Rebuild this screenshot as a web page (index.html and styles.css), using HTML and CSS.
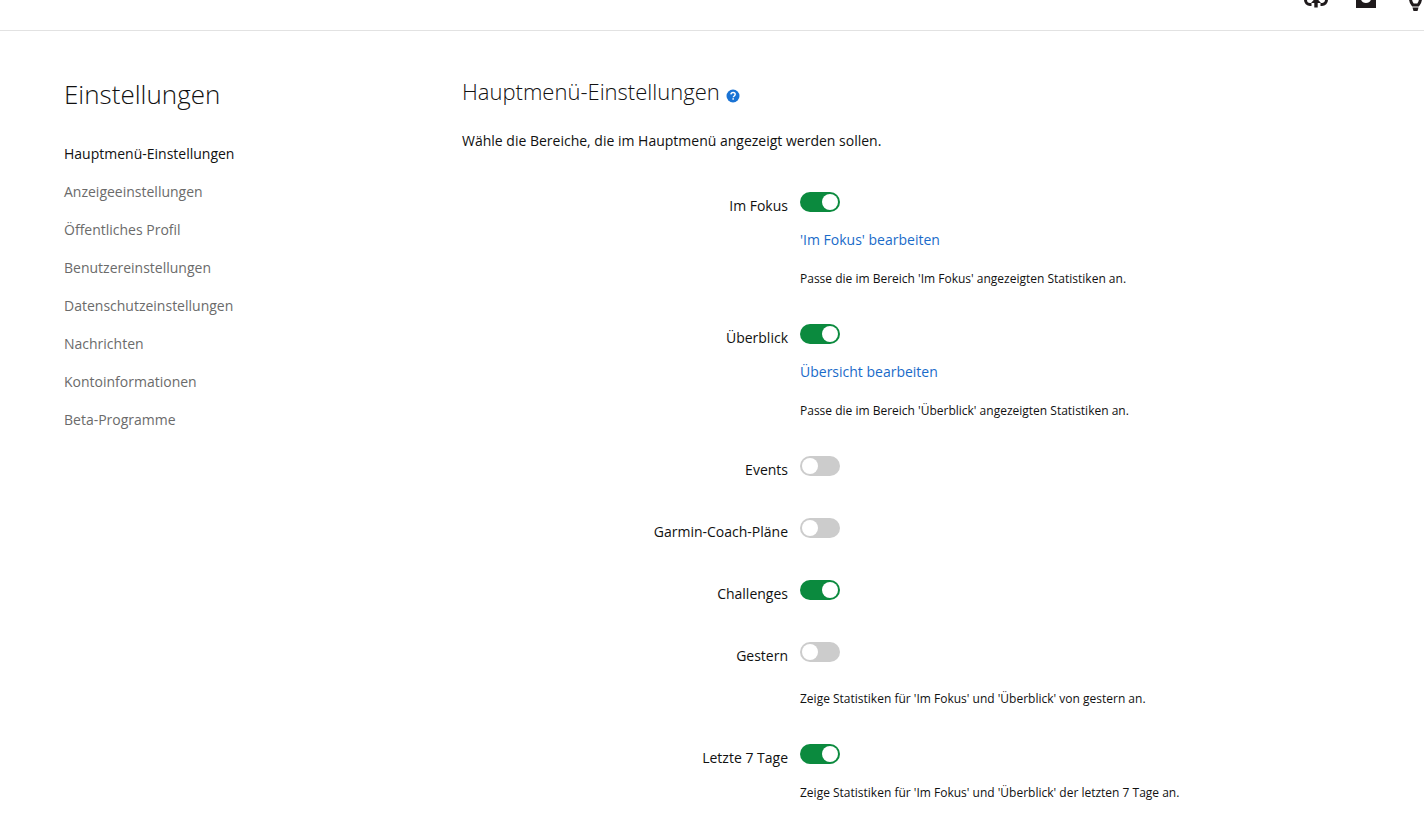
FILE: index.html
```html
<!DOCTYPE html>
<html lang="de">
<head>
<meta charset="utf-8">
<title>Einstellungen</title>
<link rel="stylesheet" href="styles.css">
</head>
<body>
<header class="topbar">
  <svg class="icon icon-cloud" width="24" height="24" viewBox="0 0 24 24">
    <path d="M7.500 19.500H6A4.500 4.500 0 0 1 1.500 15V8M16.500 19.500H18a4.500 4.500 0 0 0 4.500-4.500V8" fill="none" stroke="#1f1a1c" stroke-width="3"/>
    <path d="M12 12.500L7 18h3.300v4.500h3.400V18H17z" fill="#1f1a1c"/>
  </svg>
  <svg class="icon icon-inbox" width="20" height="20" viewBox="0 0 20 20">
    <path d="M0 0H20V20H0ZM2.500 0V11.500H5C5.500 13.500 7.500 15 10 15S14.500 13.500 15 11.500H17.500V0Z" fill="#1f1a1c" fill-rule="evenodd"/>
  </svg>
  <svg class="icon icon-bulb" width="16" height="24" viewBox="0 0 16 24">
    <path d="M2.500 8V12C2.500 15 4 16.500 5 18H10C11 16.500 12.500 15 12.500 12V8" fill="none" stroke="#1f1a1c" stroke-width="3"/>
    <path d="M4.500 20.500h6L9.500 24h-4z" fill="#1f1a1c"/>
  </svg>
</header>
<div class="page">
  <nav class="sidebar">
    <h1 class="sidebar-title">Einstellungen</h1>
    <ul class="menu">
      <li class="menu-item active">Hauptmenü-Einstellungen</li>
      <li class="menu-item">Anzeigeeinstellungen</li>
      <li class="menu-item">Öffentliches Profil</li>
      <li class="menu-item">Benutzereinstellungen</li>
      <li class="menu-item">Datenschutzeinstellungen</li>
      <li class="menu-item">Nachrichten</li>
      <li class="menu-item">Kontoinformationen</li>
      <li class="menu-item">Beta-Programme</li>
    </ul>
  </nav>
  <main class="content">
    <h2 class="heading">Hauptmenü-Einstellungen
      <svg class="help" width="14" height="14" viewBox="0 0 14 14"><circle cx="7" cy="7" r="6.500" fill="#1a73d4"/><path d="M4.900 5.400c.1-1.200 1-1.900 2.200-1.900s2.100.7 2.100 1.800c0 1.700-1.900 1.600-1.900 3" fill="none" stroke="#fff" stroke-width="1.400"/><rect x="6.400" y="9.200" width="1.500" height="1.500" fill="#fff"/></svg>
    </h2>
    <p class="intro">Wähle die Bereiche, die im Hauptmenü angezeigt werden sollen.</p>

    <div class="row">
      <div class="label">Im Fokus</div>
      <div class="control">
        <div class="toggle-wrap"><span class="toggle on"></span></div>
        <a class="link">'Im Fokus' bearbeiten</a>
        <p class="desc desc-after-link">Passe die im Bereich 'Im Fokus' angezeigten Statistiken an.</p>
      </div>
    </div>
    <div class="row">
      <div class="label">Überblick</div>
      <div class="control">
        <div class="toggle-wrap"><span class="toggle on"></span></div>
        <a class="link">Übersicht bearbeiten</a>
        <p class="desc desc-after-link">Passe die im Bereich 'Überblick' angezeigten Statistiken an.</p>
      </div>
    </div>
    <div class="row">
      <div class="label">Events</div>
      <div class="control"><div class="toggle-wrap"><span class="toggle"></span></div></div>
    </div>
    <div class="row">
      <div class="label">Garmin-Coach-Pläne</div>
      <div class="control"><div class="toggle-wrap"><span class="toggle"></span></div></div>
    </div>
    <div class="row">
      <div class="label">Challenges</div>
      <div class="control"><div class="toggle-wrap"><span class="toggle on"></span></div></div>
    </div>
    <div class="row">
      <div class="label">Gestern</div>
      <div class="control">
        <div class="toggle-wrap"><span class="toggle"></span></div>
        <p class="desc">Zeige Statistiken für 'Im Fokus' und 'Überblick' von gestern an.</p>
      </div>
    </div>
    <div class="row">
      <div class="label">Letzte 7 Tage</div>
      <div class="control">
        <div class="toggle-wrap"><span class="toggle on"></span></div>
        <p class="desc desc-close">Zeige Statistiken für 'Im Fokus' und 'Überblick' der letzten 7 Tage an.</p>
      </div>
    </div>
  </main>
</div>
</body>
</html>
```

FILE: styles.css
```css
* { box-sizing: border-box; }
html, body { margin: 0; height: 825px; overflow: hidden; background: #fff; }
body { font-family: "Open Sans", sans-serif; color: #111; }

.topbar {
  height: 31px;
  border-bottom: 1px solid #e2e2e2;
  display: flex;
  justify-content: flex-end;
  align-items: flex-end;
  padding-bottom: 21px;
}
.icon { display: block; flex: none; }
.icon-cloud { margin-right: 28px; }
.icon-inbox { margin-right: 32px; margin-bottom: 1px; }
.icon-bulb { margin-bottom: -2px; }

.page { display: flex; padding-left: 64px; }
.sidebar { width: 398px; flex: none; padding-top: 45px; }
.sidebar-title { margin: 0 0 32px; font-size: 26px; line-height: 36px; font-weight: 300; color: #111; }
.menu { list-style: none; margin: 0; padding: 0; }
.menu-item { font-size: 14px; line-height: 20px; margin-bottom: 18px; color: #6b6b6b; }
.menu-item.active { color: #111; }

.content { flex: 1; padding-top: 45px; }
.heading { margin: 0; height: 30px; font-size: 22px; line-height: 30px; font-weight: 300; color: #111; }
.help { vertical-align: -3px; margin-left: 1px; }
.intro { margin: 25px 0 41px; font-size: 14px; line-height: 20px; }

.row { display: flex; gap: 12px; margin-bottom: 36px; }
.label { width: 326px; flex: none; text-align: right; font-size: 14px; line-height: 20px; padding-top: 4px; }
.control { display: flex; flex-direction: column; align-items: flex-start; }
.toggle-wrap { height: 26px; }
.toggle {
  display: block;
  position: relative;
  width: 40px;
  height: 20px;
  border-radius: 10px;
  background: #ccc;
}
.toggle::after {
  content: "";
  position: absolute;
  top: 2px;
  left: 2px;
  width: 16px;
  height: 16px;
  border-radius: 50%;
  background: #fff;
}
.toggle.on { background: #0b8a3e; }
.toggle.on::after { left: 22px; }
.link { margin-top: 12px; font-size: 14px; line-height: 20px; color: #1a6bc9; }
.desc { margin: 22px 0 0; font-size: 12px; line-height: 18px; color: #111; }
.desc.desc-after-link { margin-top: 20px; }
.desc.desc-close { margin-top: 14px; }
```
